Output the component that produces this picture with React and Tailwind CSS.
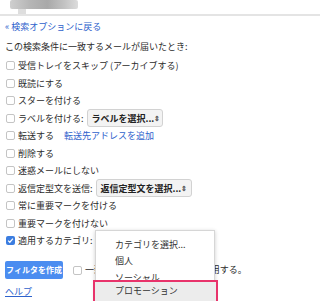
import React from "react";

const font = { fontFamily: '"Noto Sans CJK JP", "Noto Sans", sans-serif' };

function Box({ checked }) {
  if (checked) {
    return (
      <span className="w-[9px] h-[9px] rounded-[2px] bg-[#3b7de0] flex items-center justify-center shrink-0">
        <svg width="7" height="7" viewBox="0 0 8 8">
          <path d="M1.3 4.2 L3.2 6 L6.8 1.8" stroke="white" strokeWidth="1.4" fill="none" />
        </svg>
      </span>
    );
  }
  return <span className="w-[9px] h-[9px] rounded-[2px] border border-[#c4c4c4] bg-white shrink-0" />;
}

function Select({ label, width }) {
  return (
    <span className={`${width} h-[18px] ml-[3px] px-[4px] shrink-0 whitespace-nowrap flex items-center justify-between rounded-[3px] border border-[#d2d2d2] bg-[#f3f3f3] font-bold text-[#222]`}>
      <span>{label}</span>
      <span className="text-[7px] leading-none text-[#555]">⇕</span>
    </span>
  );
}

function Row({ checked, children }) {
  return (
    <div className="h-[17.5px] flex items-center gap-[3px] pl-[6px] whitespace-nowrap">
      <Box checked={checked} />
      <span className="flex items-center">{children}</span>
    </div>
  );
}

export default function App() {
  return (
    <div className="relative w-[320px] h-[301px] overflow-hidden bg-white text-[9px] text-[#2b2b2b]" style={font}>
      <div className="h-[18px] relative">
        <div className="absolute left-[10px] top-0 w-[68px] h-[9px] rounded-[2px] bg-[linear-gradient(90deg,#cfcfcf,#b5b5b5_30%,#a9a9a9_55%,#c3c3c3_80%,#dcdcdc)]" />
        <div className="absolute left-[18px] top-[9px] w-[8px] h-[5px] bg-[#dedede]" />
        <div className="absolute left-0 right-0 top-[14px] h-[2px] bg-[#e4e4e4]" />
      </div>

      <div className="h-[18px] flex items-center pl-[5px] text-[#2e62cc]">« 検索オプションに戻る</div>
      <div className="h-[21px] flex items-center pl-[5px]">この検索条件に一致するメールが届いたとき:</div>

      <Row>受信トレイをスキップ (アーカイブする)</Row>
      <Row>既読にする</Row>
      <Row>スターを付ける</Row>
      <Row>
        ラベルを付ける:
        <Select label="ラベルを選択..." width="w-[76px]" />
      </Row>
      <Row>
        転送する
        <span className="ml-[10px] text-[#2e62cc]">転送先アドレスを追加</span>
      </Row>
      <Row>削除する</Row>
      <Row>迷惑メールにしない</Row>
      <Row>
        返信定型文を送信:
        <Select label="返信定型文を選択..." width="w-[96px]" />
      </Row>
      <Row>常に重要マークを付ける</Row>
      <Row>重要マークを付けない</Row>
      <Row checked>
        適用するカテゴリ:
        <span className="ml-[3px] w-[110px] h-[18px] rounded-[3px] border border-[#8db4f2] bg-white" />
      </Row>

      <div className="h-[21px] mt-[10px] flex items-center pl-[5px] whitespace-nowrap">
        <span className="w-[58px] h-[18px] rounded-[2px] bg-[#4b8df0] text-white text-[8px] font-bold flex items-center justify-center">
          フィルタを作成
        </span>
        <span className="ml-[10px] flex items-center gap-[3px]">
          <Box />
          一致する会話にもフィルタを適用する。
        </span>
      </div>
      <div className="pl-[5px] pt-[4px] text-[#2e62cc] underline">ヘルプ</div>

      <div className="absolute left-[95px] top-[230px] w-[120px] h-[80px] bg-white border border-[#d6d6d6] shadow-[0_1px_4px_rgba(0,0,0,0.2)] pt-[5px]">
        {["カテゴリを選択...", "個人", "ソーシャル"].map(t => (
          <div key={t} className="h-[16.5px] flex items-center pl-[19px] text-[#333]">{t}</div>
        ))}
      </div>
      <div className="absolute left-[93px] top-[280px] w-[125px] h-[24px] border-2 border-[#e8336b] bg-[#ececec] flex items-center pl-[20px] pb-[2px] text-[#333]">
        プロモーション
      </div>
    </div>
  );
}
